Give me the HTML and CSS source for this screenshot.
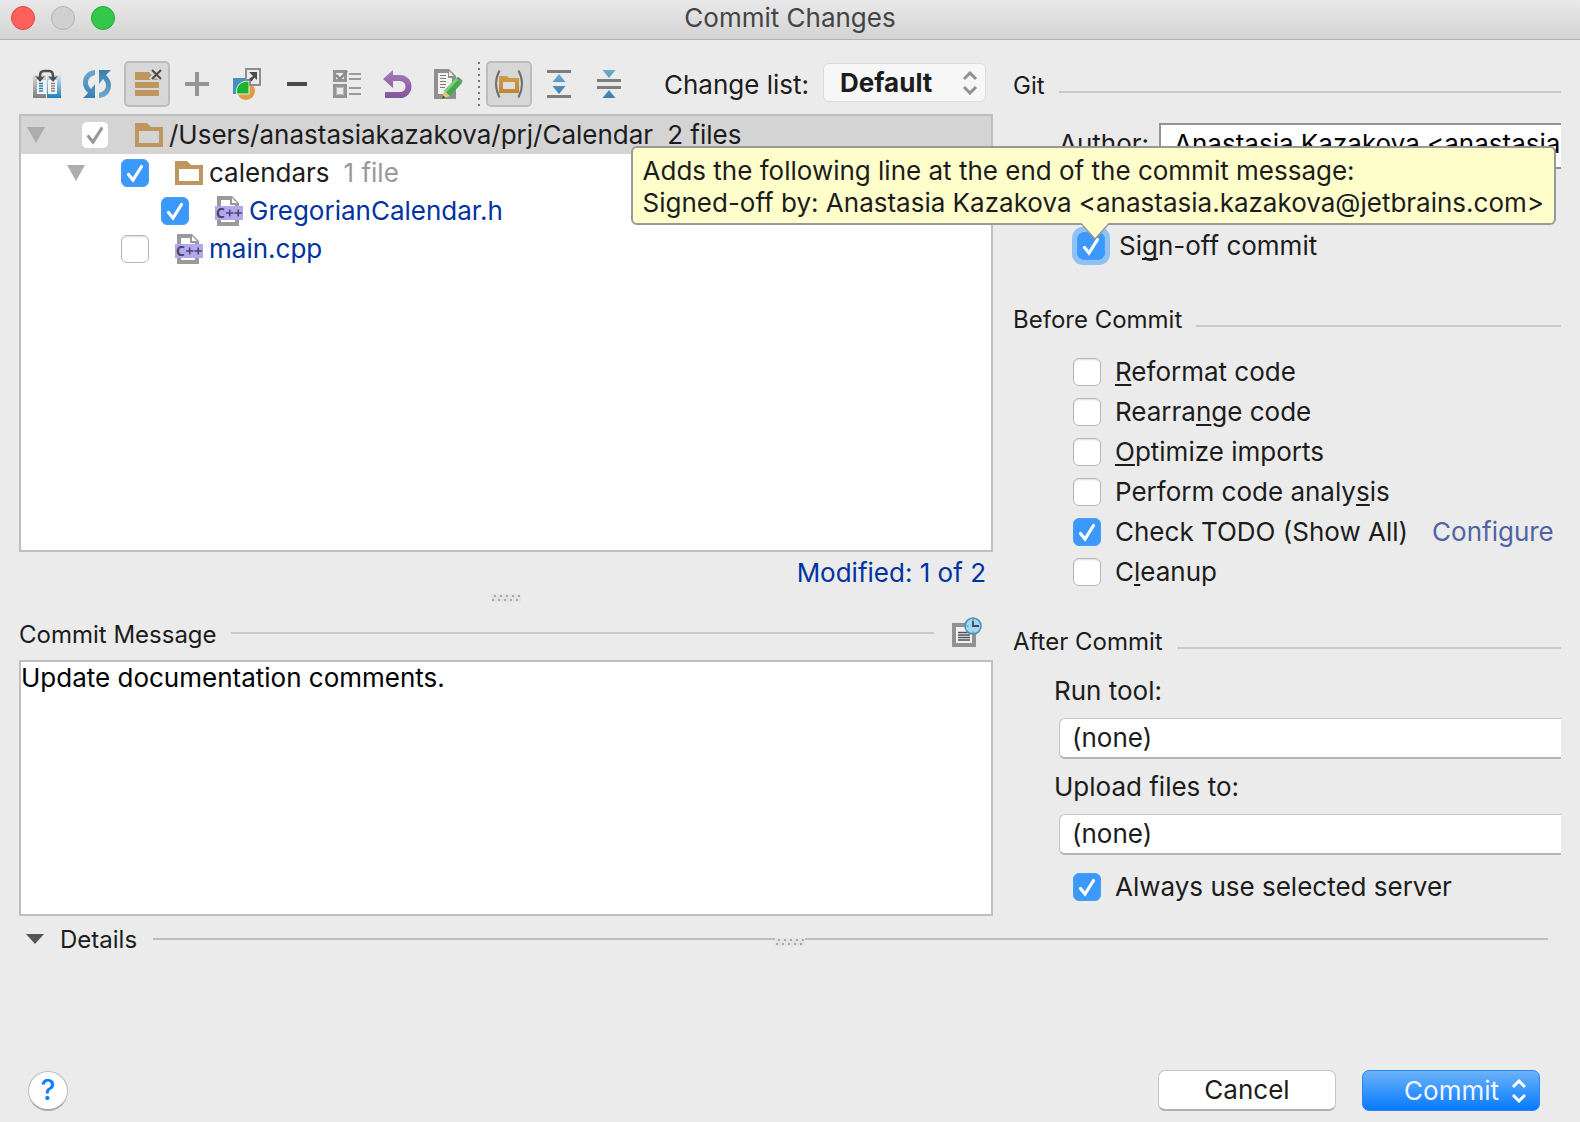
FILE: index.html
```html
<!DOCTYPE html>
<html lang="en">
<head>
<meta charset="utf-8">
<title>Commit Changes</title>
<link rel="stylesheet" href="styles.css">
</head>
<body>
<svg class="defs" aria-hidden="true">
  <defs>
    <linearGradient id="steel" x1="0" y1="0" x2="0" y2="1"><stop offset="0" stop-color="#6fa9cd"/><stop offset="1" stop-color="#3b7fb0"/></linearGradient>
    <linearGradient id="fadeGrey" x1="0" y1="0" x2="0" y2="1"><stop offset="0" stop-color="#dcdcdc"/><stop offset="1" stop-color="#7d7d7d"/></linearGradient>
    <linearGradient id="fadeBlue" x1="0" y1="0" x2="0" y2="1"><stop offset="0" stop-color="#d5e6f0"/><stop offset="1" stop-color="#1b80bd"/></linearGradient>
    <linearGradient id="purple" x1="0" y1="0" x2="0" y2="1"><stop offset="0" stop-color="#a97cba"/><stop offset="1" stop-color="#83559a"/></linearGradient>
    <linearGradient id="amber" x1="0" y1="0" x2="0" y2="1"><stop offset="0" stop-color="#d39a4a"/><stop offset="1" stop-color="#c08634"/></linearGradient>
  </defs>
  <symbol id="folder" viewBox="0 0 28 24"><path fill="#bf9560" fill-rule="evenodd" d="M0 0h12l4 4h12v20H0zM4 8v12h20V8z"/></symbol>
  <symbol id="cpp" viewBox="0 0 28 30">
    <path fill="#9a9a9a" fill-rule="evenodd" d="M2 0h15l7 7v3h-4V9h-5V4H6v6H2zM17 2v5h5zM2 24h4v2h14v-2h4v6H2z"/>
    <rect y="10" width="28" height="14" fill="#b3a7f2"/>
    <path stroke="#4b4557" stroke-width="1.5" d="M11 17h7.500M14.700 13.500v7M19.500 17h7.500M23.200 13.500v7"/>
  </symbol>
  <symbol id="twisty" viewBox="0 0 18 16"><path fill="#adadad" d="M0 0h18L9 16z"/></symbol>
</svg>

<header class="titlebar">
  <div class="lights">
    <button class="light light-close" aria-label="Close"></button>
    <button class="light light-min" aria-label="Minimize" disabled></button>
    <button class="light light-zoom" aria-label="Zoom"></button>
  </div>
  <h1 class="window-title">Commit Changes</h1>
</header>

<main class="content">
  <div class="changes">
    <div class="toolbar">
      <button class="tool" aria-label="Show diff"><svg viewBox="0 0 32 32">
        <path fill="url(#fadeGrey)" d="M2 7h13v23H2z"/><path fill="url(#fadeBlue)" d="M16 7h14v23H16z"/>
        <path fill="#f2f2f2" d="M6 12h9v14H6zM17 12h9v14h-9z"/>
        <path stroke="#2d82bb" stroke-width="1.400" d="M8 18h4M8 20.500h4M8 23h4M8 15.500h4"/>
        <path stroke="#888" stroke-width="1.400" d="M20 18h4M20 20.500h4M20 23h4M20 15.500h4"/>
        <path fill="none" stroke="#505050" stroke-width="2.500" d="M9 10V8q0-5 4-5h5q4 0 4 5v2"/>
        <path fill="#505050" d="M4 8q5 2 10 0l-5 6zM17 8q5 2 10 0l-5 6z"/></svg></button>
      <button class="tool" aria-label="Refresh"><svg viewBox="0 0 32 32">
        <g id="half"><path fill="url(#steel)" d="M14 2C5 3 2 9 2 15c0 4 2 7 5 10l-5 5h12V16l-4 5C5 16 6 9 14 7z"/></g>
        <use href="#half" transform="rotate(180 16 16)"/></svg></button>
      <button class="tool tool-on" aria-label="Show unversioned files" aria-pressed="true"><svg viewBox="0 0 32 32">
        <path fill="#bf9560" d="M4 4h14l3 3-3 3 2 2H4zM24 10l4 2h-6zM4 14h24v6H4zM4 22h24v6H4z"/>
        <path stroke="#494949" stroke-width="2" d="M21 2l9 9M30 2l-9 9"/></svg></button>
      <button class="tool" aria-label="New changelist"><svg viewBox="0 0 32 32"><path fill="#959595" d="M14 4h4v10h10v4H18v10h-4V18H4v-4h10z"/></svg></button>
      <button class="tool" aria-label="Move to another changelist"><svg viewBox="0 0 32 32">
        <path fill="#4690c1" d="M2 10h16v16H2z"/><circle cx="15" cy="23" r="9" fill="#e29b46"/>
        <path fill="#19b52c" stroke="#e9f5e9" d="M18 13v13H5.500C4.500 18 9 13 18 13z"/>
        <path fill="#ebebeb" stroke="#8e8e8e" stroke-width="2" d="M15 1h14v16H19v-5h-4z"/>
        <path fill="#494949" d="M18 4h8v8l-2.500-2.500-3 4-2.500-2.500 4-3z"/></svg></button>
      <button class="tool" aria-label="Delete changelist"><svg viewBox="0 0 32 32"><path fill="#494949" d="M6 14h20v4H6z"/></svg></button>
      <button class="tool" aria-label="Set active changelist"><svg viewBox="0 0 32 32">
        <path fill="none" stroke="#949494" stroke-width="3" d="M3.500 3.500h11v9h-11z"/><path fill="none" stroke="#949494" stroke-width="3" d="M3.500 17.500h11v11h-11z"/>
        <path fill="none" stroke="#b4b4b4" d="M5.500 19.500h7v7h-7z"/>
        <path fill="none" stroke="#8a8a8a" stroke-width="2.500" d="M5 7l4 4 7-8"/>
        <path stroke="#9a9a9a" stroke-width="2" d="M18 6h12M18 11h12M18 20h12M18 26h12"/></svg></button>
      <button class="tool" aria-label="Revert"><svg viewBox="0 0 32 32">
        <path fill="url(#purple)" d="M12 2v5h7a11.500 11.500 0 0 1 0 23H4v-6h15a5.500 5.500 0 0 0 0-11h-7v7L2 11z"/></svg></button>
      <button class="tool" aria-label="Edit source"><svg viewBox="0 0 32 32">
        <path fill="#8f8f8f" d="M3 1h15l7 7v23H3z"/><path fill="#f2f2f2" d="M7 5h10v5h4v16H7zM18 3v5h5z"/>
        <path stroke="#7c7c7c" stroke-width="1.200" d="M9 7.500h6M9 10.500h6M9 13.500h6M9 16.500h6M9 19.500h5"/>
        <path fill="#43ab4b" d="M25 10l6 5-12 13-6-5z"/><path fill="#7fd07f" d="M25 10l2 1.700-12 13L13 23z"/>
        <path fill="#6d8f6d" d="M25 10l2.500-1 4 3.500L31 15z"/>
        <path fill="#e9c07c" d="M13 23l6 5-8 3z"/><path fill="#444" d="M11 31l1-3.500 2.500 2z"/></svg></button>
      <span class="tool-sep"></span>
      <button class="tool tool-on" aria-label="Group by directory" aria-pressed="true"><svg viewBox="0 0 32 32">
        <path fill="none" stroke="#6f6f6f" stroke-width="2" d="M6.500 2.500q-7 13 0 27M25.500 2.500q7 13 0 27"/>
        <path fill="url(#amber)" d="M6 8h8l2 2h10v15H6z"/><path fill="#dedede" d="M10 14h12v7H10z"/></svg></button>
      <button class="tool" aria-label="Expand all"><svg viewBox="0 0 32 32">
        <path fill="#7e7e7e" d="M4 2h24v3H4zM4 27h24v3H4z"/><path fill="url(#steel)" d="M16 6l6.500 8h-13zM16 26l6.500-8h-13z"/></svg></button>
      <button class="tool" aria-label="Collapse all"><svg viewBox="0 0 32 32">
        <path fill="#7e7e7e" d="M4 11h24v3H4zM4 18h24v3H4z"/><path fill="url(#steel)" d="M16 10l6.500-8h-13zM16 22l6.500 8h-13z"/></svg></button>
      <div class="changelist">
        <label for="changelist">Change list:</label>
        <span class="popup">
          <select id="changelist" class="popup-select"><option>Default</option></select>
          <svg class="popup-arrows" viewBox="0 0 16 24"><path d="M2 8l6-6 6 6M2 16l6 6 6-6"/></svg>
        </span>
      </div>
    </div>

    <ul class="tree" role="tree" aria-label="Changed files">
      <li class="row row-selected" role="treeitem">
        <svg class="twisty"><use href="#twisty"/></svg>
        <input type="checkbox" class="check check-partial" id="f0" checked>
        <svg class="folder"><use href="#folder"/></svg>
        <label for="f0">/Users/anastasiakazakova/prj/Calendar</label><span class="count">2 files</span>
      </li>
      <li class="row level-1" role="treeitem">
        <svg class="twisty"><use href="#twisty"/></svg>
        <input type="checkbox" class="check" id="f1" checked>
        <svg class="folder"><use href="#folder"/></svg>
        <label for="f1">calendars</label><span class="count muted">1 file</span>
      </li>
      <li class="row level-3" role="treeitem">
        <input type="checkbox" class="check" id="f2" checked>
        <svg class="file" viewBox="0 0 28 30"><use href="#cpp"/><text x="1" y="22" class="cpp-c">C</text></svg>
        <label for="f2" class="modified">GregorianCalendar.h</label>
      </li>
      <li class="row level-2" role="treeitem">
        <input type="checkbox" class="check" id="f3">
        <svg class="file" viewBox="0 0 28 30"><use href="#cpp"/><text x="1" y="22" class="cpp-c">C</text></svg>
        <label for="f3" class="modified">main.cpp</label>
      </li>
    </ul>
    <p class="summary modified">Modified: 1 of 2</p>
    <div class="grip"></div>

    <div class="group-head message-head">
      <label for="message">Commit Message</label><span class="rule"></span>
      <button class="history" aria-label="Commit message history"><svg viewBox="0 0 32 32">
        <path fill="#919191" fill-rule="evenodd" d="M1 7h24v24H1zM5 11v16h16V11z"/>
        <path fill="#f2f2f2" d="M5 11h16v16H5z"/>
        <path stroke="#4f4f4f" stroke-width="1.400" d="M7 16.500h12M7 19h12M7 21.500h12M7 24h12"/>
        <circle cx="22" cy="10" r="8" fill="#a6d5ee" stroke="#4594bf" stroke-width="1.600"/>
        <path fill="none" stroke="#3f4a52" stroke-width="1.800" d="M22 5v5h6"/><path stroke="#5b7f95" stroke-width="1.200" d="M15.500 10h2M22 2.500v2M22 15.500v2"/></svg></button>
    </div>
    <textarea id="message" class="message">Update documentation comments.</textarea>
  </div>

  <div class="options">
    <section>
      <h2 class="group-head low">Git<span class="rule"></span></h2>
      <div class="author">
        <label for="author">Author:</label>
        <input id="author" class="author-input" type="text" value="Anastasia Kazakova &lt;anastasia.kazakova@jetbrains.com&gt;">
      </div>
      <div class="signoff">
        <input type="checkbox" class="check check-focus" id="signoff" checked aria-describedby="tip">
        <label for="signoff">Si<u>g</u>n-off commit</label>
        <div class="tip" role="tooltip" id="tip">Adds the following line at the end of the commit message:<br>Signed-off by: Anastasia Kazakova &lt;anastasia.kazakova@jetbrains.com&gt;</div>
        <svg class="tip-tail" viewBox="0 0 28 18"><path fill="#ffffcc" d="M0 0h28v2h-1L14 17 1 2H0z"/><path fill="none" stroke="#999" stroke-width="1.500" d="M0 1.500L14 17 28 1.500"/></svg>
      </div>
    </section>

    <section class="before">
      <h2 class="group-head low">Before Commit<span class="rule"></span></h2>
      <div class="checks">
        <div class="option"><input type="checkbox" class="check" id="o1"><label for="o1"><u>R</u>eformat code</label></div>
        <div class="option"><input type="checkbox" class="check" id="o2"><label for="o2">Rearra<u>n</u>ge code</label></div>
        <div class="option"><input type="checkbox" class="check" id="o3"><label for="o3"><u>O</u>ptimize imports</label></div>
        <div class="option"><input type="checkbox" class="check" id="o4"><label for="o4">Perform code analy<u>s</u>is</label></div>
        <div class="option"><input type="checkbox" class="check" id="o5" checked><label for="o5">Check TODO (Show All)</label><a class="configure" href="#configure">Configure</a></div>
        <div class="option"><input type="checkbox" class="check" id="o6"><label for="o6">C<u>l</u>eanup</label></div>
      </div>
    </section>

    <section class="after">
      <h2 class="group-head low">After Commit<span class="rule"></span></h2>
      <div class="fields">
        <label for="runtool">Run tool:</label>
        <select id="runtool" class="combo"><option>(none)</option></select>
        <label for="upload">Upload files to:</label>
        <select id="upload" class="combo"><option>(none)</option></select>
      </div>
      <div class="option"><input type="checkbox" class="check" id="server" checked><label for="server">Always use selected server</label></div>
    </section>
  </div>
</main>

<div class="group-head details">
  <svg class="details-arrow" viewBox="0 0 18 10"><path fill="#555" d="M0 0h18L9 10z"/></svg>
  <span>Details</span><span class="rule rule-dark"></span>
  <div class="grip details-grip"></div>
</div>

<footer class="footer">
  <button class="help" aria-label="Help">?</button>
  <button class="btn">Cancel</button>
  <button class="btn btn-primary">Commit<svg class="btn-arrows" viewBox="0 0 16 24"><path d="M2 8l6-6 6 6M2 16l6 6 6-6"/></svg></button>
</footer>
</body>
</html>
```
FILE: styles.css
```css
* { box-sizing: border-box; }

body {
  margin: 0;
  min-height: 100vh;
  display: flex;
  flex-direction: column;
  background: #ebebeb;
  color: #1c1c1c;
  font: 26px/32px Inter, "Liberation Sans", sans-serif;
  overflow-x: hidden;
}

button, input, select, textarea { font: inherit; color: inherit; margin: 0; }
button { padding: 0; border: 0; background: none; }
h1, h2, p, ul { margin: 0; padding: 0; font-weight: 400; }
svg { display: block; flex: none; }
u { text-decoration-thickness: 2px; text-underline-offset: 3px; text-decoration-skip-ink: none; }
.defs { position: absolute; width: 0; height: 0; }
.modified { color: #0032a0; }
.muted { color: #999; }

/* Title bar */
.titlebar {
  display: grid;
  grid-template-columns: 1fr auto 1fr;
  align-items: center;
  height: 40px;
  padding: 0 11px 3px;
  background: linear-gradient(#e9e9e9, #d3d3d3);
  border-bottom: 1px solid #b1b1b1;
}
.lights { display: flex; gap: 16px; }
.light { width: 24px; height: 24px; border-radius: 50%; border: 1px solid; }
.light-close { background: #fc605b; border-color: #e2463f; }
.light-min { background: #d0d0d0; border-color: #b2b2b2; }
.light-zoom { background: #34c84a; border-color: #24a934; }
.window-title { font-size: 26px; color: #444; }

/* Two columns */
.content {
  display: grid;
  grid-template-columns: minmax(0, 974fr) minmax(0, 548fr);
  gap: 20px;
  padding: 21px 19px 0;
}
.changes { display: flex; flex-direction: column; }

.toolbar { display: flex; gap: 4px; height: 53px; padding-left: 5px; }
.tool { width: 46px; height: 46px; padding: 7px; flex: none; border-radius: 5px; }
.tool svg { width: 32px; height: 32px; }
.tool-on { background: #d7d7d7; border: 2px solid #bdbdbd; padding: 5px; }
.tool-sep {
  width: 8px;
  height: 46px;
  background: repeating-linear-gradient(#777 0 2px, transparent 2px 6px) 4px 1px / 2px 100% no-repeat;
}
.changelist { display: flex; gap: 14px; margin-left: auto; padding: 2px 7px 0 0; height: 41px; white-space: nowrap; }
.changelist label { padding-top: 6px; }
.popup { display: grid; align-items: center; }
.popup-select {
  grid-area: 1 / 1;
  width: 163px;
  height: 39px;
  padding: 0 40px 0 16px;
  appearance: none;
  border: 1px solid #dcdcdc;
  border-radius: 6px;
  background: #f7f7f7;
  font-weight: 700;
}
.popup-arrows { grid-area: 1 / 1; justify-self: end; width: 16px; height: 24px; margin-right: 8px; pointer-events: none; }
.popup-arrows path { fill: none; stroke: #919191; stroke-width: 3; }

/* Tree */
.tree { height: 438px; border: 2px solid #bfbfbf; background: #fff; list-style: none; }
.row { display: flex; align-items: center; height: 38px; padding-left: 6px; white-space: nowrap; }
.row-selected { background: #d4d4d4; }
.level-1 { padding-left: 46px; }
.level-2 { padding-left: 100px; }
.level-3 { padding-left: 140px; }
.twisty { width: 18px; height: 16px; margin-right: 36px; }
.folder { width: 28px; height: 24px; margin: 0 6px 0 26px; }
.file { width: 28px; height: 30px; margin: 0 6px 0 26px; }
.count { margin-left: 14px; }
.cpp-c { font: 700 14px "Open Sans", sans-serif; fill: #4b4557; }

.check {
  flex: none;
  width: 28px;
  height: 28px;
  appearance: none;
  border: 1px solid #b5b5b5;
  border-radius: 6px;
  background: #fff;
  box-shadow: inset 0 2px 2px -1px #ddd;
}
.check:checked {
  border-color: #4a9df5;
  box-shadow: none;
  background: #3b99fc url("data:image/svg+xml,%3Csvg xmlns='http://www.w3.org/2000/svg' viewBox='0 0 26 26'%3E%3Cpath d='M6.500 14.500l4.500 5.500L19.500 6.500' fill='none' stroke='white' stroke-width='3.200' stroke-linecap='round'/%3E%3C/svg%3E") center / 26px 26px no-repeat;
}
.check-partial:checked {
  border-color: #d4d4d4;
  background: #fff url("data:image/svg+xml,%3Csvg xmlns='http://www.w3.org/2000/svg' viewBox='0 0 26 26'%3E%3Cpath d='M6.500 14.500l4.500 5.500L19.500 6.500' fill='none' stroke='%23999' stroke-width='3.200' stroke-linecap='round'/%3E%3C/svg%3E") center / 26px 26px no-repeat;
}
.check-focus { outline: 5px solid #8fc1f5; }

.summary { padding: 5px 7px 0 0; text-align: right; }
.grip {
  align-self: center;
  width: 30px;
  height: 8px;
  margin: 5px 0 14px;
  background:
    repeating-linear-gradient(90deg, transparent 0 3px, #aaa 3px 5px, transparent 5px 6px) 0 1px / 100% 2px no-repeat,
    repeating-linear-gradient(90deg, transparent 0 1px, #aaa 1px 3px, transparent 3px 6px) 0 5px / 100% 2px no-repeat,
    #e4e4e4;
}

/* Group headers */
.group-head { display: flex; align-items: center; gap: 14px; font-size: 24px; line-height: 28px; }
.rule { flex: 1; height: 2px; background: #c9c9c9; }
.rule-dark { background: #bdbdbd; }
.low { align-items: flex-end; }
.low .rule { margin-bottom: 7px; }
.message-head { height: 34px; padding-right: 10px; }
.message-head label { padding-top: 4px; }
.history { margin-left: 3px; align-self: flex-start; }
.history svg { width: 32px; height: 32px; }

.message {
  height: 256px;
  margin-top: 10px;
  padding: 0;
  border: 2px solid #bfbfbf;
  border-radius: 0;
  outline: 0;
  resize: none;
  background: #fff;
  color: #000;
}

/* Options column */
.options { padding-top: 11px; }
.author { display: flex; gap: 10px; margin-top: 23px; padding-left: 46px; }
.author label { padding-top: 5px; }
.author-input {
  flex: 1;
  min-width: 0;
  height: 46px;
  padding: 0 0 5px 13px;
  border: 2px solid #939393;
  border-right: 0;
  border-radius: 0;
  background: #fff;
  color: #000;
}
.signoff { position: relative; display: flex; align-items: center; gap: 14px; margin-top: 61px; padding-left: 64px; }
.tip {
  position: absolute;
  right: 5px;
  bottom: 37px;
  width: max-content;
  padding: 7px 10px 4px;
  border: 2px solid #999;
  border-radius: 6px;
  background: #ffffcc;
  white-space: nowrap;
}
.tip-tail { position: absolute; left: 68px; bottom: 22px; width: 28px; height: 18px; }
.before { margin-top: 44px; }
.checks { padding-top: 18px; }
.option { display: flex; align-items: center; gap: 14px; height: 40px; padding-left: 60px; white-space: nowrap; }
.configure { margin-left: 10px; color: #4f63a5; text-decoration: none; }
.after { margin-top: 36px; }
.fields { display: flex; flex-direction: column; padding: 19px 0 0 41px; }
.combo {
  height: 41px;
  margin: 11px 0 12px 5px;
  padding: 0 12px;
  appearance: none;
  border: 1px solid #c4c4c4;
  border-bottom: 2px solid #b4b4b4;
  border-right: 0;
  border-radius: 6px 0 0 6px;
  background: #fff;
}

/* Details and footer */
.details { position: relative; gap: 16px; margin-top: 8px; padding: 0 32px 0 26px; }
.details > span:first-of-type { padding-top: 2px; }
.details-arrow { width: 18px; height: 10px; }
.details-grip { position: absolute; left: calc(50% - 15px); top: 14px; margin: 0; }

.footer { display: flex; align-items: center; gap: 26px; margin-top: auto; padding: 12px 40px 11px 28px; }
.help {
  width: 40px;
  height: 40px;
  margin-right: auto;
  border: 1px solid #bbb;
  border-bottom: 2px solid #aaa;
  border-radius: 50%;
  background: #fff;
  color: #0a7cff;
  font-size: 28px;
  font-weight: 500;
}
.btn {
  width: 178px;
  height: 41px;
  border: 1px solid #c4c4c4;
  border-bottom: 2px solid #b0b0b0;
  border-radius: 7px;
  background: #fff;
}
.btn-primary {
  display: flex;
  align-items: center;
  justify-content: flex-end;
  gap: 12px;
  padding-right: 12px;
  border: 1px solid #2a86f5;
  background: linear-gradient(#6cb3fa, #067aff);
  color: #f2f4ff;
}
.btn-arrows { width: 16px; height: 24px; }
.btn-arrows path { fill: none; stroke: #fff; stroke-width: 3; }
```
